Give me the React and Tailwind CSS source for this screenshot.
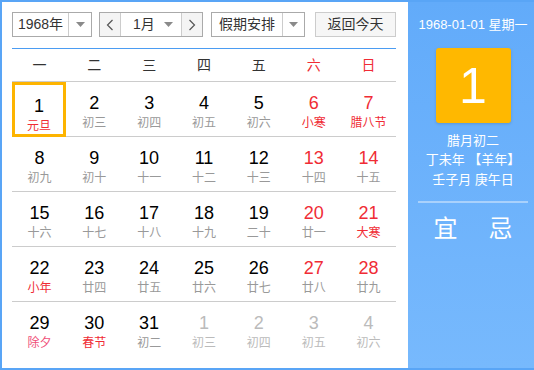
import React from "react";

const F = { fontFamily: '"Liberation Sans", Arial, "Noto Sans CJK SC", sans-serif' };

const Tri = () => (
  <svg width="9" height="5" viewBox="0 0 9 5"><path d="M0 0 L9 0 L4.5 5 Z" fill="#8a8a8a" /></svg>
);

const Chev = ({ dir }) => (
  <svg width="8" height="12" viewBox="0 0 8 12">
    <path d={dir === "l" ? "M6.5 1 L1.5 6 L6.5 11" : "M1.5 1 L6.5 6 L1.5 11"} fill="none" stroke="#555" strokeWidth="1.2" />
  </svg>
);

const R = "#f02c35";
const G = "#999";
const L = "#bbb";

const rows = [
  [
    ["1", "#000", "元旦", R, true],
    ["2", "#000", "初三", G],
    ["3", "#000", "初四", G],
    ["4", "#000", "初五", G],
    ["5", "#000", "初六", G],
    ["6", R, "小寒", R],
    ["7", R, "腊八节", R],
  ],
  [
    ["8", "#000", "初九", G],
    ["9", "#000", "初十", G],
    ["10", "#000", "十一", G],
    ["11", "#000", "十二", G],
    ["12", "#000", "十三", G],
    ["13", R, "十四", G],
    ["14", R, "十五", G],
  ],
  [
    ["15", "#000", "十六", G],
    ["16", "#000", "十七", G],
    ["17", "#000", "十八", G],
    ["18", "#000", "十九", G],
    ["19", "#000", "二十", G],
    ["20", R, "廿一", G],
    ["21", R, "大寒", R],
  ],
  [
    ["22", "#000", "小年", R],
    ["23", "#000", "廿四", G],
    ["24", "#000", "廿五", G],
    ["25", "#000", "廿六", G],
    ["26", "#000", "廿七", G],
    ["27", R, "廿八", G],
    ["28", R, "廿九", G],
  ],
  [
    ["29", "#000", "除夕", "#f0507a"],
    ["30", "#000", "春节", R],
    ["31", "#000", "初二", G],
    ["1", L, "初三", L],
    ["2", L, "初四", L],
    ["3", L, "初五", L],
    ["4", L, "初六", L],
  ],
];

const week = ["一", "二", "三", "四", "五", "六", "日"];

export default function App() {
  return (
    <div style={F} className="w-[534px] h-[370px] bg-[#59a5f6] pl-[2px] py-[2px] flex">
      <div className="w-[406px] h-full bg-white pl-[10px] pr-[12px] pt-[10px]">
        {/* controls */}
        <div className="flex h-[25px] text-[14px] text-[#333]">
          <div className="w-[80px] flex border border-[#aaa]">
            <div className="w-[55px] flex items-center justify-center">1968年</div>
            <div className="flex-1 border-l border-[#ccc] flex items-center justify-center"><Tri /></div>
          </div>
          <div className="w-[104px] ml-[7px] flex border border-[#aaa]">
            <div className="w-[21px] bg-[#f4f4f4] flex items-center justify-center border-r border-[#ccc]"><Chev dir="l" /></div>
            <div className="flex-1 flex items-center pl-[12px] pr-[8px] justify-between">
              <span>1月</span>
              <Tri />
            </div>
            <div className="w-[21px] bg-[#f4f4f4] flex items-center justify-center border-l border-[#ccc]"><Chev dir="r" /></div>
          </div>
          <div className="w-[94px] ml-[8px] flex border border-[#aaa]">
            <div className="w-[70px] flex items-center justify-center">假期安排</div>
            <div className="flex-1 border-l border-[#ccc] flex items-center justify-center"><Tri /></div>
          </div>
          <div className="w-[81px] ml-[10px] flex items-center justify-center border border-[#ccc] bg-[#f6f6f6]">返回今天</div>
        </div>
        <div className="mt-[11px] h-[1px] bg-[#4b9cf2]"></div>
        {/* week header */}
        <div className="grid grid-cols-7 h-[33px] border-b border-[#ccc] text-[14px]">
          {week.map((w, i) => (
            <div key={w} className="flex items-center justify-center" style={{ color: i >= 5 ? R : "#333" }}>{w}</div>
          ))}
        </div>
        {rows.map((r, ri) => (
          <div key={ri} className={"grid grid-cols-7 h-[55px] " + (ri < 4 ? "border-b border-[#ccc]" : "")}>
            {r.map(([n, nc, l, lc, sel], ci) => (
              <div
                key={ci}
                className={"flex flex-col items-center pt-[10px] " + (sel ? "border-[3px] border-[#fdb400] pt-[7px] w-[54px]" : "")}
              >
                <div className="text-[18px] leading-[22px]" style={{ color: nc }}>{n}</div>
                <div className="text-[12px] leading-[16px] mt-[1px]" style={{ color: lc }}>{l}</div>
              </div>
            ))}
          </div>
        ))}
      </div>
      <div className="flex-1 bg-gradient-to-b from-[#62abfa] to-[#77b9fd] flex flex-col items-center pl-[4px] text-white">
        <div className="mt-[14px] text-[13px] leading-[18px]">1968-01-01 星期一</div>
        <div className="mt-[14px] w-[75px] h-[75px] rounded-[3px] bg-[#ffb800] flex items-center justify-center text-[50px] leading-none shadow-[0_1px_3px_rgba(0,0,0,0.15)]">1</div>
        <div className="mt-[9px] text-[13px] leading-[18px]">腊月初二</div>
        <div className="mt-[1px] text-[13px] leading-[18px]">丁未年 【羊年】</div>
        <div className="mt-[2px] text-[13px] leading-[18px]">壬子月 庚午日</div>
        <div className="mt-[12px] w-[110px] h-[2px] bg-[#a9d1fc]"></div>
        <div className="mt-[13px] flex gap-[31px] text-[24px] leading-[26px]">
          <span>宜</span>
          <span>忌</span>
        </div>
      </div>
    </div>
  );
}
